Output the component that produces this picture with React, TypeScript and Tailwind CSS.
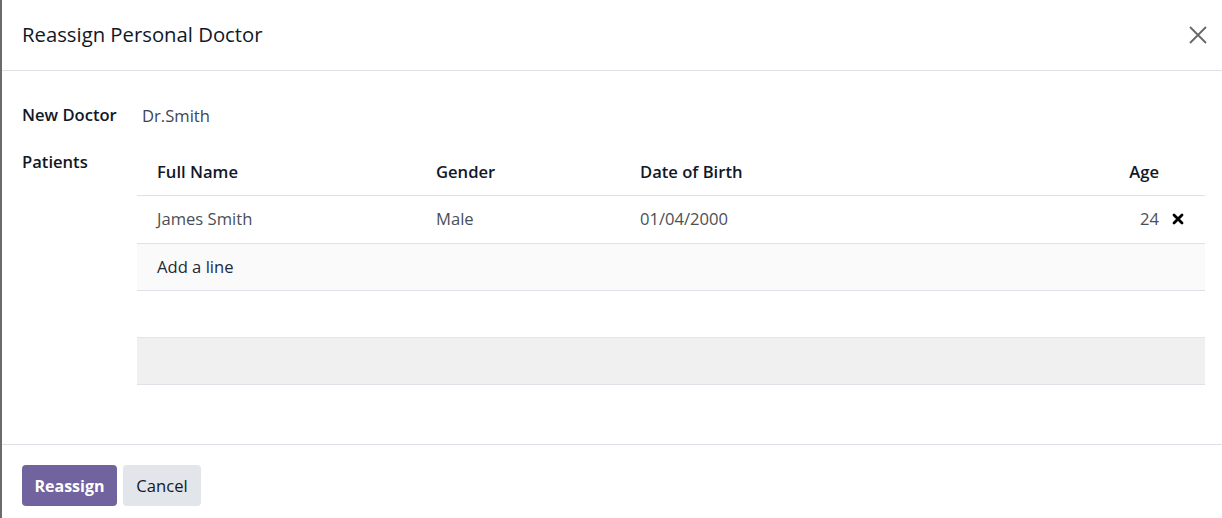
import React from "react";

function CloseIcon() {
  return (
    <svg width="20" height="20" viewBox="0 0 20 20" fill="none">
      <path d="M2 2 L18 18 M18 2 L2 18" stroke="#666666" strokeWidth="1.8" />
    </svg>
  );
}

function TimesIcon() {
  return (
    <svg width="12" height="12" viewBox="0 0 12 12">
      <path d="M2 2 L10 10 M10 2 L2 10" stroke="#000" strokeWidth="2.8" strokeLinecap="round" />
    </svg>
  );
}

export default function App() {
  return (
    <div
      className="w-[1222px] h-[518px] bg-white border-l-2 border-[#6b6b6b] flex flex-col overflow-hidden text-[#212529]"
      style={{ fontFamily: '"Open Sans", "Noto Sans", sans-serif' }}
    >
      {/* Header */}
      <div className="h-[71px] flex items-center justify-between pl-[20px] pr-[14px] border-b border-[#dee2e6] shrink-0">
        <h1 className="text-[20.3px] font-normal text-[#111827] -mt-[1px]">Reassign Personal Doctor</h1>
        <CloseIcon />
      </div>

      {/* Body */}
      <div className="flex-1 pl-[20px] pr-[17px] pt-[31px]">
        <div className="flex h-[26px] items-center">
          <div className="w-[120px] text-[16.6px] font-semibold text-[#111827]">New Doctor</div>
          <div className="text-[16.6px] text-[#3f4650] mt-[2px]">Dr.Smith</div>
        </div>
        <div className="flex mt-[21px]">
          <div className="w-[115px] text-[16.6px] font-semibold text-[#111827] leading-[22px] mt-[2px]">Patients</div>
          <div className="flex-1">
            <div className="grid grid-cols-[299px_204px_1fr_90px] h-[47px] items-center border-b border-[#dee2e6] text-[16.6px] font-semibold text-[#111827] pt-[1px]">
              <div className="pl-[20px]">Full Name</div>
              <div>Gender</div>
              <div>Date of Birth</div>
              <div className="text-right pr-[46px]">Age</div>
            </div>
            <div className="grid grid-cols-[299px_204px_1fr_90px] h-[48px] items-center border-b border-[#dee2e6] text-[16.6px] text-[#495057]">
              <div className="pl-[20px]">James Smith</div>
              <div>Male</div>
              <div>01/04/2000</div>
              <div className="flex items-center justify-end pr-[21px] gap-[13px]">
                <span>24</span>
                <TimesIcon />
              </div>
            </div>
            <div className="h-[47px] flex items-center bg-[#fafafa] border-b border-[#dee2e6] pl-[20px] text-[16.6px] text-[#1f2937]">
              Add a line
            </div>
            <div className="h-[47px] border-b border-[#e5e5e5]"></div>
            <div className="h-[47px] bg-[#f0f0f0] border-b border-[#dee2e6]"></div>
          </div>
        </div>
      </div>

      {/* Footer */}
      <div className="h-[74px] border-t border-[#dee2e6] shrink-0 flex items-start pt-[20px] pl-[20px] gap-[6px]">
        <button className="h-[41px] w-[95px] rounded-[4px] bg-[#71639e] text-white text-[16px] font-bold">
          Reassign
        </button>
        <button className="h-[41px] w-[78px] rounded-[4px] bg-[#e2e5e9] text-[#111827] text-[16.6px] pt-[2px]">
          Cancel
        </button>
      </div>
    </div>
  );
}
